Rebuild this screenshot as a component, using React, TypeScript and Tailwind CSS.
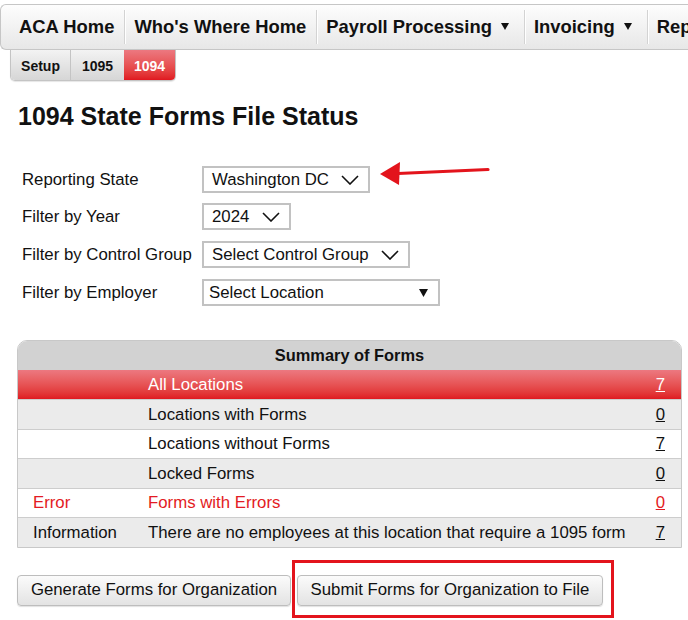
import React from "react";

const Tri = () => (
  <svg width="8" height="7" viewBox="0 0 8 7" className="ml-[9px] inline-block">
    <path d="M0 0 L8 0 L4 7 Z" fill="#111" />
  </svg>
);

const Chevron = () => (
  <svg width="18" height="10" viewBox="0 0 18 10" className="shrink-0">
    <path d="M1 1 L9 9 L17 1" fill="none" stroke="#111" strokeWidth="1.6" />
  </svg>
);

function NavItem({ label, drop, first }: { label: string; drop?: boolean; first?: boolean }) {
  return (
    <div className="flex items-center h-full shrink-0">
      {!first && <div className="w-px h-[34px] bg-[#d3d3d3] shadow-[1px_0_0_#ffffff]" />}
      <div className={`pl-[9px] ${drop ? "pr-[15px]" : "pr-[10px]"} flex items-center whitespace-nowrap`}>
        {label}
        {drop && <Tri />}
      </div>
    </div>
  );
}

function Sel({ text, w }: { text: string; w: string }) {
  return (
    <div className={`h-[27px] ${w} border-2 border-[#c2c2c2] bg-white flex items-center justify-between pl-[8px] pr-[9px]`}>
      <span className="whitespace-nowrap">{text}</span>
      <Chevron />
    </div>
  );
}

const rows = [
  { c1: "", c2: "Locations with Forms", n: "0", bg: "bg-[#ebebeb]" },
  { c1: "", c2: "Locations without Forms", n: "7", bg: "bg-white" },
  { c1: "", c2: "Locked Forms", n: "0", bg: "bg-[#ebebeb]" },
  { c1: "Error", c2: "Forms with Errors", n: "0", bg: "bg-white", red: true },
  { c1: "Information", c2: "There are no employees at this location that require a 1095 form", n: "7", bg: "bg-[#ebebeb]" },
];

export default function App() {
  return (
    <div className="relative w-[688px] h-[620px] overflow-hidden bg-white text-[#111] font-['Liberation_Sans',Arial,sans-serif]">
      {/* top nav */}
      <div className="mt-[4px] h-[46px] border border-r-0 border-[#c6c6c6] rounded-l-[6px] bg-gradient-to-b from-[#fdfdfd] to-[#e7e7e7] flex items-center pl-[9px] text-[18.4px] font-bold overflow-hidden">
        <NavItem label="ACA Home" first />
        <NavItem label="Who's Where Home" />
        <NavItem label="Payroll Processing" drop />
        <NavItem label="Invoicing" drop />
        <NavItem label="Reports" />
      </div>
      {/* sub tabs */}
      <div className="ml-[10px] flex w-fit h-[31px] text-[14px] font-bold rounded-b-[5px] overflow-hidden border border-t-0 border-[#c4c4c4] shadow-[0_1px_1px_rgba(0,0,0,0.1)]">
        <div className="w-[60px] flex items-center justify-center pt-[2px] bg-gradient-to-b from-[#f3f3f3] to-[#d6d6d6] border-r border-[#c4c4c4]">Setup</div>
        <div className="w-[53px] flex items-center justify-center pt-[2px] bg-gradient-to-b from-[#f3f3f3] to-[#d6d6d6]">1095</div>
        <div className="w-[51px] flex items-center justify-center pt-[2px] bg-gradient-to-b from-[#ec7880] to-[#e0161f] text-white">1094</div>
      </div>
      {/* title */}
      <h1 className="mt-[20px] ml-[18px] text-[25px] leading-[30px] font-bold">1094 State Forms File Status</h1>

      {/* filters */}
      <div className="mt-[35px] ml-[22px] flex flex-col gap-[10px] text-[16.8px]">
        <div className="flex items-center">
          <div className="w-[180px]">Reporting State</div>
          <Sel text="Washington DC" w="w-[168px]" />
        </div>
        <div className="flex items-center">
          <div className="w-[180px]">Filter by Year</div>
          <Sel text="2024" w="w-[89px]" />
        </div>
        <div className="flex items-center mt-[1px]">
          <div className="w-[180px]">Filter by Control Group</div>
          <Sel text="Select Control Group" w="w-[208px]" />
        </div>
        <div className="flex items-center mt-[1px]">
          <div className="w-[180px]">Filter by Employer</div>
          <div className="h-[27px] w-[238px] border-2 border-[#c2c2c2] bg-white flex items-center justify-between pl-[5px] pr-[10px]">
            <span>Select Location</span>
            <svg width="9" height="8" viewBox="0 0 9 8"><path d="M0 0 L9 0 L4.5 8 Z" fill="#111" /></svg>
          </div>
        </div>
      </div>

      {/* summary table */}
      <div className="mt-[34px] ml-[17px] w-[665px] border border-[#c8c8c8] rounded-t-[10px] overflow-hidden text-[16.8px]">
        <div className="h-[29px] bg-[#d2d2d2] flex items-center justify-center font-bold text-[16.4px]">Summary of Forms</div>
        <div className="h-[29px] flex items-center bg-gradient-to-b from-[#ec7880] to-[#df1820] text-white">
          <div className="w-[130px]" />
          <div className="flex-1">All Locations</div>
          <div className="pr-[16px] underline">7</div>
        </div>
        {rows.map((r, i) => (
          <div key={i} className={`h-[29.5px] border-t border-[#cdcdcd] flex items-center ${r.bg} ${r.red ? "text-[#e31b23]" : ""}`}>
            <div className="w-[130px] pl-[15px]">{r.c1}</div>
            <div className="flex-1 whitespace-nowrap">{r.c2}</div>
            <div className="pr-[16px] underline">{r.n}</div>
          </div>
        ))}
      </div>

      {/* buttons */}
      <div className="mt-[27px] ml-[17px] flex gap-[6px] text-[16.8px]">
        <button className="h-[31px] w-[274px] border border-[#bdbdbd] rounded-[4px] bg-gradient-to-b from-[#fbfbfb] to-[#e3e3e3] shadow-[0_1px_1px_rgba(0,0,0,0.12)] whitespace-nowrap">Generate Forms for Organization</button>
        <button className="h-[31px] w-[306px] border border-[#bdbdbd] rounded-[4px] bg-gradient-to-b from-[#fbfbfb] to-[#e3e3e3] shadow-[0_1px_1px_rgba(0,0,0,0.12)] whitespace-nowrap">Submit Forms for Organization to File</button>
      </div>

      {/* annotations */}
      <div className="absolute left-[292px] top-[560px] w-[322px] h-[58px] border-[3px] border-[#e3141c] pointer-events-none" />
      <svg className="absolute left-[378px] top-[160px]" width="112" height="26" viewBox="0 0 112 26">
        <path d="M20 13.5 L110 9.5" stroke="#e3141c" strokeWidth="3.2" strokeLinecap="round" />
        <path d="M2 14 L22 2 L21 25 Z" fill="#e3141c" />
      </svg>
    </div>
  );
}
